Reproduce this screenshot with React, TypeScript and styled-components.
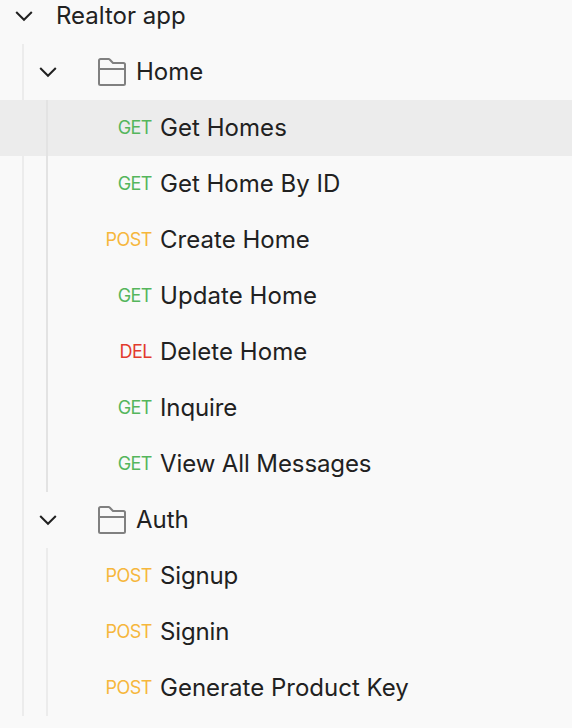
import React from "react";
import styled, { createGlobalStyle } from "styled-components";

const GlobalStyle = createGlobalStyle`
  body { margin: 0; background: #f9f9f9; overflow: hidden; }
`;

const Tree = styled.nav`
  height: 728px;
  box-sizing: border-box;
  overflow: hidden;
  background: #f9f9f9;
  color: #212121;
  font-family: Inter, "Liberation Sans", sans-serif;
  font-size: 24px;
`;

const Rows = styled.div`
  margin-top: -12px;
`;

const Row = styled.div<{ $selected?: boolean }>`
  display: flex;
  align-items: center;
  height: 56px;
  background: ${(p) => (p.$selected ? "#ececec" : "transparent")};
`;

const Guide = styled.span<{ $strong?: boolean }>`
  flex: none;
  align-self: stretch;
  width: 2px;
  margin-left: 22px;
  background: ${(p) => (p.$strong ? "#e3e3e3" : "#ececec")};
`;

const Toggle = styled.span<{ $nested?: boolean }>`
  flex: none;
  display: flex;
  width: 24px;
  margin-left: 12px;
  margin-right: ${(p) => (p.$nested ? "36px" : "20px")};
`;

const FolderSlot = styled.span`
  flex: none;
  display: flex;
  width: 32px;
  margin-right: 8px;
`;

const Method = styled.span<{ $color: string }>`
  flex: none;
  width: 104px;
  margin-right: 8px;
  padding-bottom: 2px;
  text-align: right;
  font-size: 18px;
  letter-spacing: -0.5px;
  color: ${(p) => p.$color};
`;

const Label = styled.span<{ $spacing?: number }>`
  line-height: 32px;
  white-space: nowrap;
  letter-spacing: ${(p) => p.$spacing ?? 0}px;
`;

const colors: Record<string, string> = {
  GET: "#55b65c",
  POST: "#f6b73c",
  DEL: "#e23b2e",
};

const Chevron = () => (
  <svg width="24" height="24" viewBox="0 0 24 24" fill="none" stroke="#212121" strokeWidth="2">
    <path d="M4.2 8l7.8 7.8L19.8 8" />
  </svg>
);

const Folder = () => (
  <svg width="32" height="32" viewBox="0 0 32 32" fill="none" stroke="#808080" strokeWidth="2" strokeLinejoin="round">
    <path d="M3 27.5v-23A1.5 1.5 0 0 1 4.5 3h8.1a1.5 1.5 0 0 1 1.1.5L17 7h10.5A1.5 1.5 0 0 1 29 8.5v19a1.5 1.5 0 0 1-1.5 1.5h-23A1.5 1.5 0 0 1 3 27.5z" />
    <path d="M3 13h26" />
  </svg>
);

interface ApiRequest {
  method: string;
  name: string;
  spacing?: number;
}

const folders: { name: string; strong: boolean; requests: ApiRequest[] }[] = [
  {
    name: "Home",
    strong: true,
    requests: [
      { method: "GET", name: "Get Homes", spacing: 0.05 },
      { method: "GET", name: "Get Home By ID" },
      { method: "POST", name: "Create Home", spacing: 0.03 },
      { method: "GET", name: "Update Home", spacing: 0.07 },
      { method: "DEL", name: "Delete Home", spacing: 0.05 },
      { method: "GET", name: "Inquire", spacing: -0.1 },
      { method: "GET", name: "View All Messages", spacing: -0.1 },
    ],
  },
  {
    name: "Auth",
    strong: false,
    requests: [
      { method: "POST", name: "Signup", spacing: -0.15 },
      { method: "POST", name: "Signin", spacing: -0.15 },
      { method: "POST", name: "Generate Product Key" },
    ],
  },
];

export default function App() {
  return (
    <>
      <GlobalStyle />
      <Tree>
        <Rows>
          <Row>
            <Toggle><Chevron /></Toggle>
            <Label>Realtor app</Label>
          </Row>
          {folders.map((folder) => (
            <React.Fragment key={folder.name}>
              <Row>
                <Guide />
                <Toggle $nested><Chevron /></Toggle>
                <FolderSlot><Folder /></FolderSlot>
                <Label>{folder.name}</Label>
              </Row>
              {folder.requests.map(({ method, name, spacing }) => (
                <Row key={name} $selected={name === "Get Homes"}>
                  <Guide />
                  <Guide $strong={folder.strong} />
                  <Method $color={colors[method]}>{method}</Method>
                  <Label $spacing={spacing}>{name}</Label>
                </Row>
              ))}
            </React.Fragment>
          ))}
        </Rows>
      </Tree>
    </>
  );
}
